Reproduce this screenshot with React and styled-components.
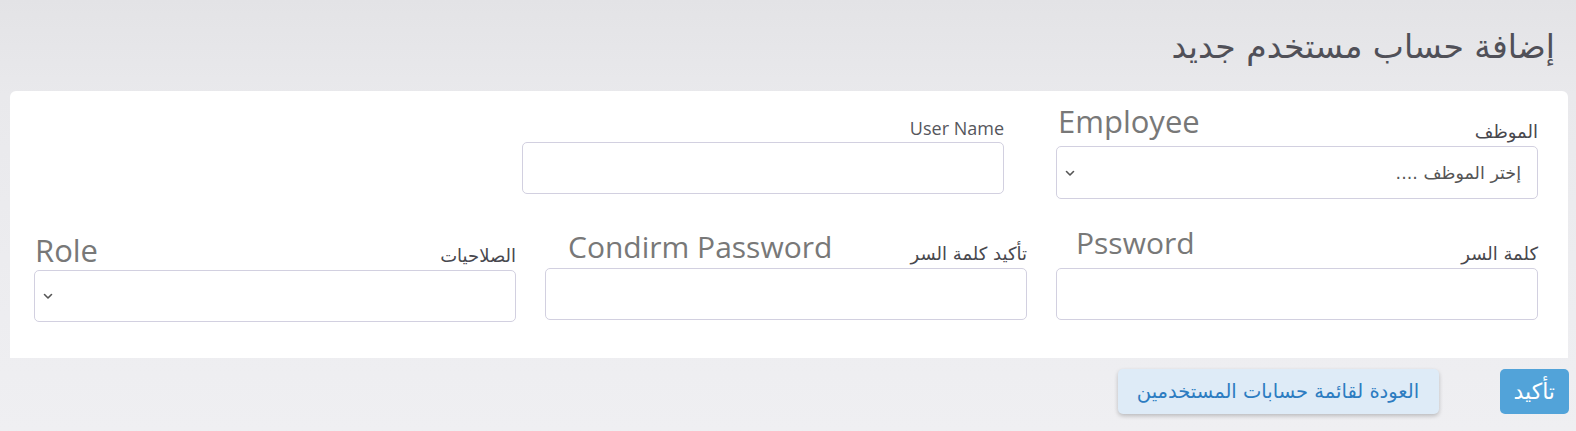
import React from "react";
import styled, { createGlobalStyle } from "styled-components";

const GlobalStyle = createGlobalStyle`
  html, body {
    margin: 0;
    height: 100%;
  }
  body {
    background: linear-gradient(180deg, #e3e3e6 0%, #e9e9ec 22%, #ececef 60%, #efeff2 100%);
    font-family: "Open Sans", "DejaVu Sans", sans-serif;
    color: #555;
  }
  #root {
    min-height: 100%;
  }
`;

const Page = styled.div`
  direction: rtl;
  padding: 0 8px 0 10px;
`;

const TitleBar = styled.header`
  height: 91px;
  display: flex;
  align-items: center;
  padding-right: 13px;
  box-sizing: border-box;
`;

const Title = styled.h1`
  margin: 0;
  padding-top: 2px;
  font-family: "DejaVu Sans", sans-serif;
  font-weight: 400;
  font-size: 33px;
  color: #505058;
`;

const Card = styled.section`
  background: #fff;
  border-radius: 6px 6px 0 0;
  padding: 10px 30px 36px 24px;
  display: flex;
  flex-direction: column;
  gap: 24px;
`;

const Row = styled.div`
  display: grid;
  grid-template-columns: repeat(3, 482px);
  column-gap: 29px;
  align-items: start;
`;

const Field = styled.div`
  width: 482px;
  display: flex;
  flex-direction: column;
  margin-right: ${(p) => p.$offsetX || 0}px;
  margin-top: ${(p) => p.$offsetY || 0}px;
`;

const Head = styled.div`
  height: 45px;
  display: flex;
  align-items: flex-end;
  justify-content: space-between;
`;

const Label = styled.label`
  font-family: ${(p) =>
    p.$latin ? `"Open Sans", sans-serif` : `"DejaVu Sans", sans-serif`};
  font-size: 18px;
  line-height: 22px;
  margin-bottom: 3px;
  color: ${(p) => (p.$latin ? "#56565c" : "#48484e")};
`;

const Hint = styled.h3`
  margin: 0 0 ${(p) => (p.$lift === undefined ? 7 : p.$lift)}px 0;
  padding-left: ${(p) => p.$indent || 0}px;
  font-family: "Open Sans", sans-serif;
  font-weight: 400;
  font-size: ${(p) => p.$size || 30}px;
  line-height: 36px;
  color: #787878;
  direction: ltr;
`;

const TextBox = styled.input`
  box-sizing: border-box;
  width: 100%;
  height: 52px;
  border: 1px solid #d2d0e0;
  border-radius: 5px;
  background: #fff;
  padding: 0 16px;
  font-family: "DejaVu Sans", sans-serif;
  font-size: 16px;
  outline: none;
`;

const SelectBox = styled.div`
  box-sizing: border-box;
  height: ${(p) => (p.$tall ? 53 : 52)}px;
  border: 1px solid #d2d0e0;
  border-radius: 5px;
  display: flex;
  align-items: center;
  justify-content: space-between;
  padding: 0 16px 0 8px;
  font-family: "DejaVu Sans", sans-serif;
  font-size: 17.5px;
  color: #555;
`;

const Chevron = styled.svg`
  width: 10px;
  height: 10px;
  margin-right: auto;
`;

const Buttons = styled.div`
  display: flex;
  gap: 61px;
  margin: 11px -1px 0 0;
`;

const Button = styled.button`
  height: 45px;
  border: none;
  border-radius: 5px;
  font-family: "DejaVu Sans", sans-serif;
  cursor: pointer;
  ${(p) =>
    p.$primary
      ? `
    background: #52a3d9;
    color: #fff;
    font-size: 22px;
    padding: 0 14px;
  `
      : `
    background: #deebf7;
    color: #2c7cc1;
    font-size: 19.5px;
    width: 321px;
    padding: 0;
    box-shadow: 0 2px 4px rgba(0, 0, 0, 0.22);
  `}
`;

const Arrow = () => (
  <Chevron viewBox="0 0 10 10" fill="none">
    <path
      d="M1.5 3.5 L5 7 L8.5 3.5"
      stroke="#555"
      strokeWidth="1.6"
      strokeLinecap="round"
      strokeLinejoin="round"
    />
  </Chevron>
);

export default function App() {
  return (
    <>
      <GlobalStyle />
      <Page>
        <TitleBar>
          <Title>إضافة حساب مستخدم جديد</Title>
        </TitleBar>
        <Card>
          <Row>
            <Field>
              <Head>
                <Label>الموظف</Label>
                <Hint $indent={2} $size={31}>
                  Employee
                </Hint>
              </Head>
              <SelectBox $tall>
                <span>إختر الموظف ....</span>
                <Arrow />
              </SelectBox>
            </Field>
            <Field $offsetX={23} $offsetY={-4}>
              <Head>
                <Label $latin>User Name</Label>
              </Head>
              <TextBox type="text" />
            </Field>
          </Row>
          <Row>
            <Field>
              <Head>
                <Label>كلمة السر</Label>
                <Hint $indent={20}>Pssword</Hint>
              </Head>
              <TextBox type="password" />
            </Field>
            <Field>
              <Head>
                <Label>تأكيد كلمة السر</Label>
                <Hint $indent={23} $lift={3}>
                  Condirm Password
                </Hint>
              </Head>
              <TextBox type="password" />
            </Field>
            <Field $offsetY={2}>
              <Head>
                <Label>الصلاحيات</Label>
                <Hint $indent={1} $lift={2} $size={31}>
                  Role
                </Hint>
              </Head>
              <SelectBox>
                <span />
                <Arrow />
              </SelectBox>
            </Field>
          </Row>
        </Card>
        <Buttons>
          <Button $primary>تأكيد</Button>
          <Button>العودة لقائمة حسابات المستخدمين</Button>
        </Buttons>
      </Page>
    </>
  );
}
